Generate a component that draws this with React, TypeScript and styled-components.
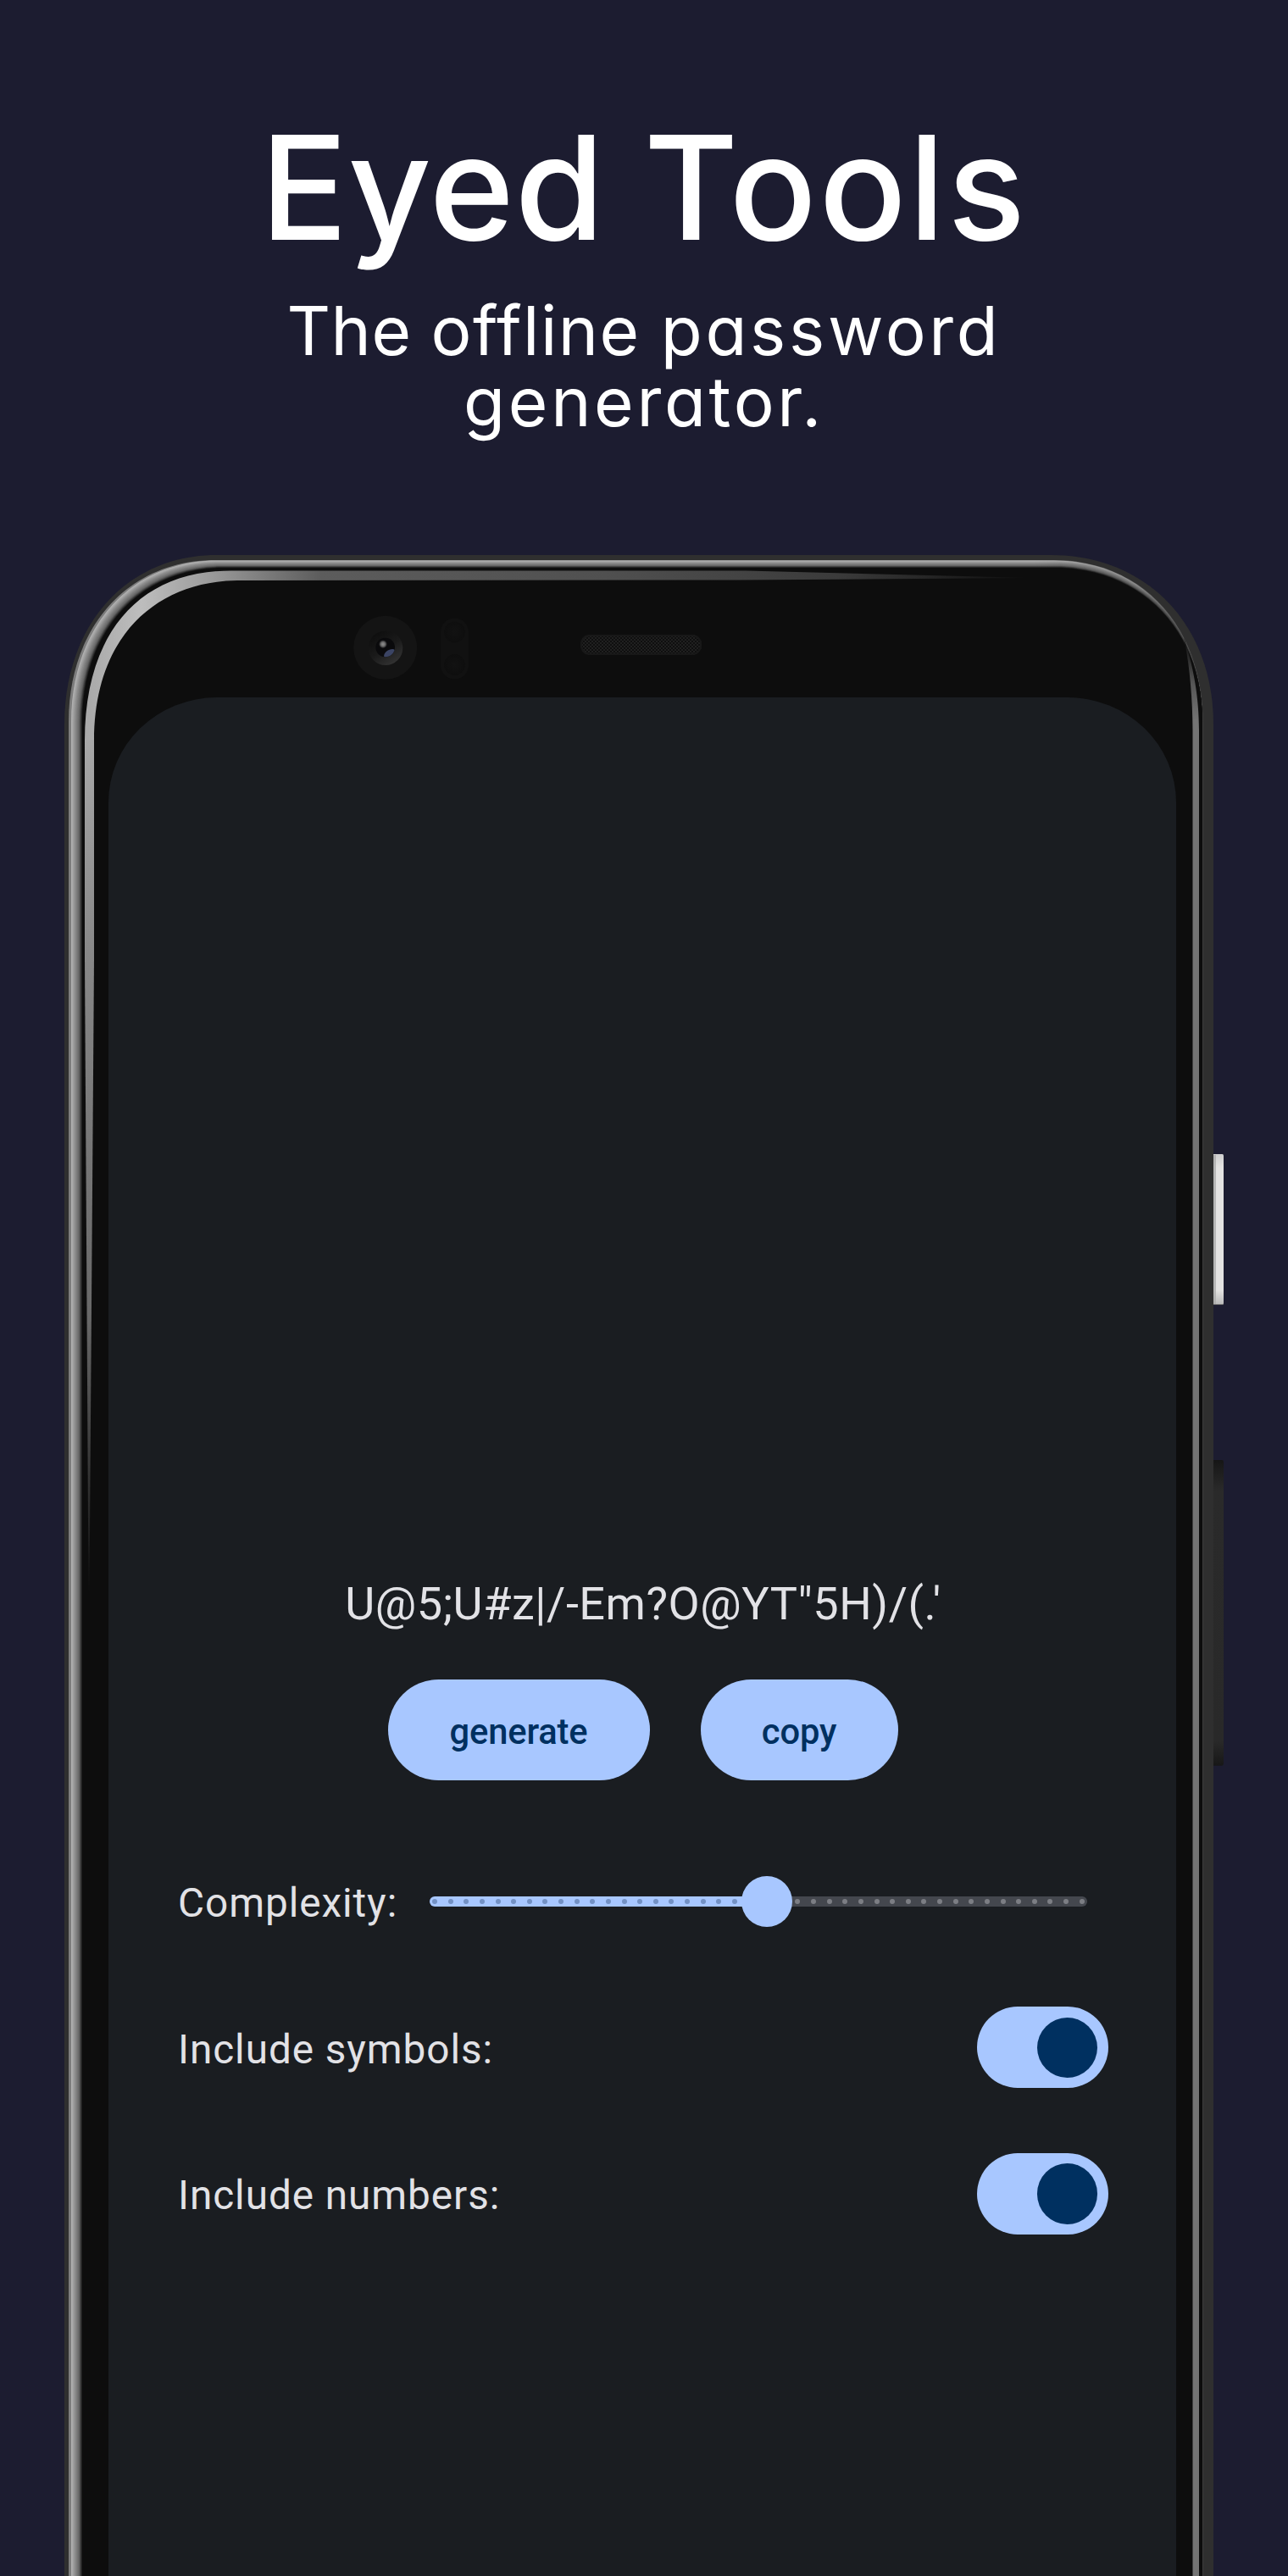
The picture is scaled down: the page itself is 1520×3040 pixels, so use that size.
import React, { useState } from "react";
import styled, { createGlobalStyle } from "styled-components";

const GlobalStyle = createGlobalStyle`
  * { box-sizing: border-box; }
  body { margin: 0; background: #1c1c30; }
`;

const Page = styled.main`
  width: 1520px;
  height: 3040px;
  overflow: hidden;
  background: #1c1c30;
  display: flex;
  flex-direction: column;
  align-items: center;
`;

const Hero = styled.header`
  height: 655px;
  flex: none;
  padding-top: 121px;
  display: flex;
  flex-direction: column;
  align-items: center;
  color: #fff;
  font-family: Inter, "Open Sans", sans-serif;
  font-feature-settings: "cv11" 1, "calt" 0;
  text-align: center;
`;

const Title = styled.h1`
  margin: 0;
  font-size: 171px;
  line-height: 200px;
  font-weight: 500;
  white-space: nowrap;
`;

const Tagline = styled.p`
  margin: 27px 0 0;
  font-size: 80px;
  line-height: 83.5px;
  font-weight: 400;
  white-space: nowrap;
`;

const Word = styled.span<{ $tracking: number }>`
  letter-spacing: ${(p) => p.$tracking}px;
`;

const Phone = styled.section`
  position: relative;
  width: 1356px;
  height: 2385px;
  flex: none;
  align-self: flex-start;
  margin-left: 76px;
  padding: 168px 44px 0 52px;
  display: flex;
`;

const Frame = styled.svg`
  position: absolute;
  left: -76px;
  top: -655px;
  width: 1520px;
  height: 3040px;
`;

const Screen = styled.div`
  position: relative;
  flex: 1;
  background: #1a1d21;
  border-radius: 128px 128px 0 0 / 124px 124px 0 0;
  padding: 1038px 80px 0 82px;
  display: flex;
  flex-direction: column;
  font-family: Roboto, sans-serif;
  color: #e2e2e6;
`;

const Password = styled.output`
  display: block;
  height: 64px;
  line-height: 64px;
  font-size: 54px;
  letter-spacing: 0.55px;
  text-align: center;
  white-space: nowrap;
`;

const Actions = styled.div`
  display: flex;
  justify-content: center;
  gap: 60px;
  margin-top: 57px;
`;

const PillButton = styled.button<{ $width: number }>`
  width: ${(p) => p.$width}px;
  height: 119px;
  padding: 4px 1px 0 0;
  border: 0;
  border-radius: 60px;
  background: #a8c7ff;
  color: #003060;
  font: 500 41.7px/50px Roboto, sans-serif;
  letter-spacing: -0.15px;
`;

const Settings = styled.div`
  display: flex;
  flex-direction: column;
  margin-top: 56.5px;
`;

const Row = styled.div`
  display: flex;
  align-items: center;
  justify-content: space-between;
  height: 172.6px;
`;

const Label = styled.span`
  font-size: 47.7px;
  line-height: 56px;
  letter-spacing: 0.95px;
  padding-top: 5px;
  white-space: nowrap;
`;

const Track = styled.div`
  position: relative;
  display: flex;
  justify-content: space-between;
  align-items: center;
  width: 776px;
  height: 12px;
  margin-right: 25px;
  padding: 0 3px;
  border-radius: 6px;
  background: linear-gradient(90deg, #a8c7ff 399px, #44474e 399px);
`;

const Tick = styled.i<{ $active: boolean }>`
  width: 6px;
  height: 6px;
  border-radius: 50%;
  background: ${(p) => (p.$active ? "#7391c4" : "#7c7e84")};
`;

const Thumb = styled.b`
  position: absolute;
  top: -24px;
  width: 60px;
  height: 60px;
  margin-left: -30px;
  border-radius: 50%;
  background: #a8c7ff;
`;

const Switch = styled.button<{ $on: boolean }>`
  width: 155.5px;
  height: 96px;
  padding: 0 13px;
  border: 0;
  border-radius: 48px;
  background: ${(p) => (p.$on ? "#a8c7ff" : "#44474e")};
  display: flex;
  align-items: center;
  justify-content: ${(p) => (p.$on ? "flex-end" : "flex-start")};
`;

const Knob = styled.span`
  width: 71.5px;
  height: 71.5px;
  border-radius: 50%;
  background: #003060;
`;

/* Outline of a rounded slab running off the bottom of the page. */
const slab = (
  l: number, t: number, r: number,
  lx: number, ly: number, rx: number, ry: number, k = 0.59,
) =>
  `M${l} 3050 V${ly} C${l} ${ly - (ly - t) * k} ${lx - (lx - l) * k} ${t} ${lx} ${t} ` +
  `H${rx} C${rx + (r - rx) * k} ${t} ${r} ${ry - (ry - t) * k} ${r} ${ry} V3050 Z`;

const STEPS = 18;
const rim = Array.from({ length: STEPS + 1 }, (_, i) => {
  const t = i / STEPS;
  const shade = Math.round(t < 0.7 ? 178 - 110 * t : 101 - ((t - 0.7) / 0.3) * 88);
  return {
    d: slab(84 + 13 * t, 661.5 + 8.5 * t, 1419, 256 + 8 * t, 852, 1244, 852),
    fill: `rgb(${shade},${shade},${shade})`,
  };
});

const PhoneFrame = () => (
  <Frame viewBox="0 0 1520 3040" aria-hidden="true">
    <defs>
      <linearGradient id="shine" gradientUnits="userSpaceOnUse" x1="100" y1="0" x2="1217" y2="0">
        <stop offset="0" stopColor="#a8a8a8" />
        <stop offset="0.06" stopColor="#bdbdbd" />
        <stop offset="0.13" stopColor="#9c9c9c" />
        <stop offset="0.25" stopColor="#5c5c5c" />
        <stop offset="0.55" stopColor="#505050" />
        <stop offset="0.8" stopColor="#3a3a3a" />
        <stop offset="1" stopColor="#0d0d0d" />
      </linearGradient>
      <linearGradient id="shineDown" gradientUnits="userSpaceOnUse" x1="0" y1="873" x2="0" y2="1880">
        <stop offset="0" stopColor="#a8a8a8" />
        <stop offset="0.25" stopColor="#888888" />
        <stop offset="0.68" stopColor="#686868" />
        <stop offset="1" stopColor="#0d0d0d" />
      </linearGradient>
      <linearGradient id="edge" gradientUnits="userSpaceOnUse" x1="0" y1="755" x2="0" y2="850">
        <stop offset="0" stopColor="#0d0d0d" />
        <stop offset="0.55" stopColor="#565656" />
        <stop offset="1" stopColor="#747474" />
      </linearGradient>
      <linearGradient id="fade" gradientUnits="userSpaceOnUse" x1="1220" y1="0" x2="1419" y2="0">
        <stop offset="0" stopColor="#0d0d0d" stopOpacity="0" />
        <stop offset="0.6" stopColor="#0d0d0d" stopOpacity="0.2" />
        <stop offset="1" stopColor="#0d0d0d" stopOpacity="0.7" />
      </linearGradient>
      <linearGradient id="power" x1="0" y1="0" x2="0" y2="1">
        <stop offset="0" stopColor="#cfcfcf" />
        <stop offset="0.09" stopColor="#e4e3e2" />
        <stop offset="0.9" stopColor="#e4e3e2" />
        <stop offset="1" stopColor="#b8b8b8" />
      </linearGradient>
      <linearGradient id="volume" x1="0" y1="0" x2="0" y2="1">
        <stop offset="0" stopColor="#161616" />
        <stop offset="0.1" stopColor="#2a2a2a" />
        <stop offset="0.92" stopColor="#292929" />
        <stop offset="1" stopColor="#171717" />
      </linearGradient>
      <linearGradient id="ring" x1="0.15" y1="0.1" x2="0.75" y2="1">
        <stop offset="0" stopColor="#0e0e0e" />
        <stop offset="0.5" stopColor="#1a1a1a" />
        <stop offset="1" stopColor="#343434" />
      </linearGradient>
      <radialGradient id="glint">
        <stop offset="0" stopColor="#909090" />
        <stop offset="0.5" stopColor="#6c6c6c" />
        <stop offset="1" stopColor="#6c6c6c" stopOpacity="0" />
      </radialGradient>
      <radialGradient id="sensor">
        <stop offset="0" stopColor="#121212" />
        <stop offset="1" stopColor="#0e0e0e" />
      </radialGradient>
      <pattern id="mesh" width="4" height="4" patternUnits="userSpaceOnUse">
        <rect width="4" height="4" fill="#202020" />
        <rect width="2" height="2" fill="#0f0f0f" />
        <rect x="2" y="2" width="2" height="2" fill="#0f0f0f" />
      </pattern>
      <clipPath id="lens"><circle cx="454.7" cy="764" r="11.3" /></clipPath>
    </defs>

    <path d="M1430 1362 H1442.5 Q1444 1362 1444 1364 V1538 Q1444 1540 1442 1540 H1430 Z" fill="url(#power)" />
    <rect x="1432" y="1363" width="3" height="176" fill="#a8a8a8" opacity="0.75" />
    <rect x="1432" y="1539" width="11" height="1" fill="#6a6a6a" />
    <path d="M1430 1723 H1442 Q1444 1723 1444 1725 V2081 Q1444 2083.7 1442 2083.7 H1430 Z" fill="url(#volume)" />

    <path d={slab(76, 655, 1432, 256, 855, 1240, 855)} fill="#2f2f2f" />
    <path d={slab(81, 661, 1419.5, 254, 852, 1244, 852)} fill="#7c7c7c" />
    {rim.map((r, i) => (
      <path key={i} d={r.d} fill={r.fill} />
    ))}
    <path d={slab(81, 661, 1419.5, 254, 852, 1244, 852)} fill="url(#fade)" />

    <path
      d="M100 874 C100 750 162 673.5 273 673.5 H880 L1217 682 L870 684.5 L280 685 C185 686 111 750 111 874 Z"
      fill="url(#shine)"
    />
    <path d="M100 873 V1130 L104.5 1880 H105.5 L111 1130 V873 Z" fill="url(#shineDown)" />
    <path d="M1397 752 C1406 780 1415 815 1415 862 V3040 H1407.5 V862 C1407.5 820 1403 780 1397 752 Z" fill="url(#edge)" />

    <circle cx="454.7" cy="764.3" r="37.5" fill="#141414" />
    <circle cx="455" cy="764.7" r="20.3" fill="url(#ring)" />
    <circle cx="454.7" cy="764" r="11.3" fill="#0a0a0c" />
    <g clipPath="url(#lens)">
      <ellipse cx="460" cy="771.5" rx="7.5" ry="4.5" fill="#3b4464" transform="rotate(-30 460 771.5)" />
    </g>
    <circle cx="452" cy="760.2" r="5" fill="url(#glint)" />

    <rect x="520" y="729.5" width="33" height="72" rx="16.5" fill="#111111" />
    <circle cx="536.5" cy="746" r="12.5" fill="url(#sensor)" />
    <circle cx="536.5" cy="784.5" r="12.5" fill="url(#sensor)" />
    <rect x="685" y="749" width="143" height="24" rx="11" fill="url(#mesh)" />
    <rect x="686" y="750" width="141" height="22" rx="10" fill="none" stroke="#181818" strokeWidth="2" />
  </Frame>
);

const TICKS = 42;
const LEVEL = 21;

const SwitchRow = ({ label }: { label: string }) => {
  const [on, setOn] = useState(true);
  return (
    <Row>
      <Label>{label}</Label>
      <Switch $on={on} role="switch" aria-checked={on} aria-label={label} onClick={() => setOn(!on)}>
        <Knob />
      </Switch>
    </Row>
  );
};

export default function App() {
  return (
    <Page>
      <GlobalStyle />
      <Hero>
        <Title>
          <Word $tracking={0.5}>Eyed </Word>
          <Word $tracking={2.6}>Tools</Word>
        </Title>
        <Tagline>
          <Word $tracking={0.5}>The </Word>
          <Word $tracking={1.5}>offline </Word>
          <Word $tracking={3.7}>password</Word>
          <br />
          <Word $tracking={3.7}>generator.</Word>
        </Tagline>
      </Hero>
      <Phone>
        <PhoneFrame />
        <Screen>
          <Password>{`U@5;U#z|/-Em?O@YT"5H)/(.'`}</Password>
          <Actions>
            <PillButton $width={309}>generate</PillButton>
            <PillButton $width={233}>copy</PillButton>
          </Actions>
          <Settings>
            <Row>
              <Label>Complexity:</Label>
              <Track>
                {Array.from({ length: TICKS }, (_, i) => (
                  <Tick key={i} $active={i <= LEVEL} />
                ))}
                <Thumb style={{ left: 7 + (764 * LEVEL) / (TICKS - 1) }} />
              </Track>
            </Row>
            <SwitchRow label="Include symbols:" />
            <SwitchRow label="Include numbers:" />
          </Settings>
        </Screen>
      </Phone>
    </Page>
  );
}
